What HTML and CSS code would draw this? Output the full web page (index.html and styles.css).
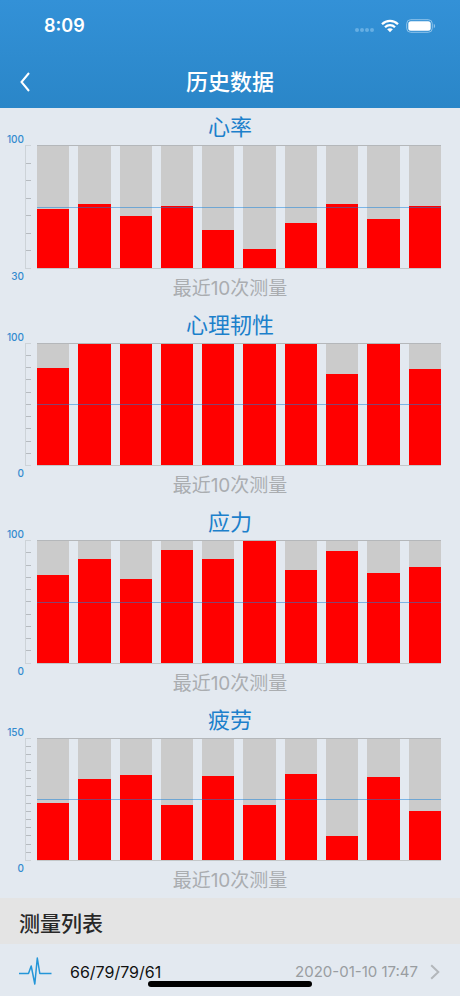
FILE: index.html
```html
<!DOCTYPE html>
<html lang="zh-CN">
<head>
<meta charset="utf-8">
<meta name="viewport" content="width=device-width, initial-scale=1">
<title>历史数据</title>
<link rel="stylesheet" href="styles.css">
</head>
<body>
<header class="top">
  <div class="status">
    <span class="time">8:09</span>
    <span class="status-icons">
      <span class="dots"><i></i><i></i><i></i><i></i></span>
      <svg class="wifi" viewBox="0 0 18 14" aria-hidden="true">
        <g fill="none" stroke="#fff" stroke-width="2.3">
          <path d="M1 5.2C5.5.8 12.500.8 17 5.200"/>
          <path d="M4 8.200C6.800 5.400 11.200 5.400 14 8.200"/>
        </g>
        <path fill="#fff" d="M6.100 10.300C7.700 8.800 10.300 8.800 11.900 10.300L9 13.300Z"/>
      </svg>
      <svg class="battery" viewBox="0 0 30 14" aria-hidden="true">
        <rect x=".7" y=".7" width="25.600" height="12.600" rx="4" fill="none" stroke="#8fc3ea" stroke-width="1"/>
        <rect x="2.300" y="2.300" width="22.400" height="9.400" rx="2.500" fill="#fff"/>
        <path d="M27.800 4.800C29.600 5.600 29.600 8.400 27.800 9.200Z" fill="#8fc3ea"/>
      </svg>
    </span>
  </div>
  <nav class="nav">
    <button class="back" type="button" aria-label="返回">
      <svg viewBox="0 0 10 20" aria-hidden="true"><path d="M9 1L1.500 10L9 19" fill="none" stroke="#fff" stroke-width="2"/></svg>
    </button>
    <h1>历史数据</h1>
  </nav>
</header>

<main class="charts">
  <section class="chart">
    <h2>心率</h2>
    <div class="body">
      <div class="axis"><span class="max">100</span><span class="min">30</span>
        <div class="ticks"><i></i><i></i><i></i><i></i><i></i><i></i><i></i><i></i></div></div>
      <div class="plot">
        <div class="bar"><b style="height:48%"></b></div>
        <div class="bar"><b style="height:52%"></b></div>
        <div class="bar"><b style="height:42%"></b></div>
        <div class="bar"><b style="height:51%"></b></div>
        <div class="bar"><b style="height:31%"></b></div>
        <div class="bar"><b style="height:15%"></b></div>
        <div class="bar"><b style="height:37%"></b></div>
        <div class="bar"><b style="height:52%"></b></div>
        <div class="bar"><b style="height:40%"></b></div>
        <div class="bar"><b style="height:51%"></b></div>
      </div>
    </div>
    <p>最近10次测量</p>
  </section>
  <section class="chart">
    <h2>心理韧性</h2>
    <div class="body">
      <div class="axis"><span class="max">100</span><span class="min">0</span>
        <div class="ticks"><i></i><i></i><i></i><i></i><i></i><i></i><i></i><i></i><i></i><i></i><i></i></div></div>
      <div class="plot">
        <div class="bar"><b style="height:80%"></b></div>
        <div class="bar"><b style="height:100%"></b></div>
        <div class="bar"><b style="height:100%"></b></div>
        <div class="bar"><b style="height:100%"></b></div>
        <div class="bar"><b style="height:100%"></b></div>
        <div class="bar"><b style="height:100%"></b></div>
        <div class="bar"><b style="height:100%"></b></div>
        <div class="bar"><b style="height:75%"></b></div>
        <div class="bar"><b style="height:100%"></b></div>
        <div class="bar"><b style="height:79%"></b></div>
      </div>
    </div>
    <p>最近10次测量</p>
  </section>
  <section class="chart">
    <h2>应力</h2>
    <div class="body">
      <div class="axis"><span class="max">100</span><span class="min">0</span>
        <div class="ticks"><i></i><i></i><i></i><i></i><i></i><i></i><i></i><i></i><i></i><i></i><i></i></div></div>
      <div class="plot">
        <div class="bar"><b style="height:72%"></b></div>
        <div class="bar"><b style="height:85%"></b></div>
        <div class="bar"><b style="height:69%"></b></div>
        <div class="bar"><b style="height:93%"></b></div>
        <div class="bar"><b style="height:85%"></b></div>
        <div class="bar"><b style="height:100%"></b></div>
        <div class="bar"><b style="height:76%"></b></div>
        <div class="bar"><b style="height:92%"></b></div>
        <div class="bar"><b style="height:74%"></b></div>
        <div class="bar"><b style="height:79%"></b></div>
      </div>
    </div>
    <p>最近10次测量</p>
  </section>
  <section class="chart">
    <h2>疲劳</h2>
    <div class="body">
      <div class="axis"><span class="max">150</span><span class="min">0</span>
        <div class="ticks"><i></i><i></i><i></i><i></i><i></i><i></i><i></i><i></i><i></i><i></i><i></i><i></i><i></i><i></i><i></i><i></i></div></div>
      <div class="plot">
        <div class="bar"><b style="height:47%"></b></div>
        <div class="bar"><b style="height:67%"></b></div>
        <div class="bar"><b style="height:70%"></b></div>
        <div class="bar"><b style="height:45%"></b></div>
        <div class="bar"><b style="height:69%"></b></div>
        <div class="bar"><b style="height:45%"></b></div>
        <div class="bar"><b style="height:71%"></b></div>
        <div class="bar"><b style="height:20%"></b></div>
        <div class="bar"><b style="height:68%"></b></div>
        <div class="bar"><b style="height:40%"></b></div>
      </div>
    </div>
    <p>最近10次测量</p>
  </section>
</main>

<section class="list">
  <h2>测量列表</h2>
  <a class="row" href="#record">
    <svg class="pulse" viewBox="0 0 34 32" aria-hidden="true"><path d="M0 17.500H9.500L12.200 10L15.800 28L18.300 2L20.800 17.500H32.500" fill="none" stroke="#2496d8" stroke-width="1.500" stroke-linejoin="round"/></svg>
    <span class="values">66/79/79/61</span>
    <time datetime="2020-01-10T17:47">2020-01-10 17:47</time>
    <svg class="more" viewBox="0 0 10 16" aria-hidden="true"><path d="M1.200 1.200L8.300 8L1.200 14.800" fill="none" stroke="#b3b7bb" stroke-width="2"/></svg>
  </a>
</section>
<div class="home"></div>
</body>
</html>
```
FILE: styles.css
```css
* { box-sizing: border-box; margin: 0; padding: 0; }

body {
  min-height: 100vh;
  display: flex;
  flex-direction: column;
  background: #e3e9f0;
  font-family: Inter, "Noto Sans CJK SC", sans-serif;
}

.top {
  background: linear-gradient(#3391d7, #2a86c8);
  color: #fff;
}

.status {
  height: 52px;
  padding: 0 24px 0 44px;
  display: flex;
  align-items: center;
  justify-content: space-between;
}

.time { font-size: 18px; font-weight: 600; line-height: 24px; }
.status-icons { display: flex; align-items: center; gap: 7px; }
.dots { display: flex; gap: 1px; padding-top: 8px; }
.dots i { width: 4px; height: 4px; border-radius: 50%; background: #66aee3; }
.wifi { width: 18px; height: 14px; }
.battery { width: 30px; height: 14px; }

.nav {
  height: 56px;
  padding-top: 3px;
  display: grid;
  grid-template-columns: 50px 1fr 50px;
  align-items: center;
}

.back {
  height: 44px;
  padding-left: 20px;
  border: 0;
  background: none;
  text-align: left;
}
.back svg { display: block; width: 10px; height: 20px; }
.nav h1 { font-size: 22px; font-weight: 500; line-height: 32px; text-align: center; }

.charts {
  flex: 1;
  display: grid;
  grid-auto-rows: 1fr;
}

.chart {
  display: flex;
  flex-direction: column;
  text-align: center;
}
.chart h2 {
  height: 37px;
  font-size: 22px;
  font-weight: 400;
  line-height: 38px;
  color: #1c80cb;
}
.chart p {
  height: 37px;
  font-size: 19px;
  line-height: 40px;
  color: #aaadb0;
}

.body {
  flex: 1;
  min-height: 120px;
  display: flex;
  gap: 6px;
  padding-right: 19px;
}

.axis {
  position: relative;
  width: 31px;
  padding-left: 25px;
  display: flex;
  font-size: 10px;
  font-weight: 500;
  line-height: 12px;
  color: #348bcf;
}
.max, .min { position: absolute; right: 7px; }
.max { top: -12px; }
.min { bottom: -13px; }

.ticks {
  flex: 1;
  display: flex;
  flex-direction: column;
  justify-content: space-between;
  border-left: 1px solid #cdd3d8;
}
.ticks i { height: 1px; background: #b6bbc0; }
.ticks i:first-child, .ticks i:last-child { background: #cdd3d8; }

.plot {
  position: relative;
  flex: 1;
  display: grid;
  grid-template-columns: repeat(10, 1fr);
  column-gap: 9px;
  border-top: 1px solid #b4b7ba;
  border-bottom: 1px solid #c3c7c9;
}
.plot::after {
  content: "";
  position: absolute;
  inset: 50% 0 auto;
  height: 1px;
  background: rgba(20, 130, 220, 0.5);
}
.bar {
  display: flex;
  align-items: flex-end;
  background: #cbcbcb;
}
.bar b { width: 100%; background: #f00; }

.list h2 {
  height: 46px;
  padding: 0 19px;
  background: #e4e4e4;
  font-size: 21px;
  font-weight: 500;
  line-height: 51px;
  color: #282828;
}

.row {
  height: 52px;
  padding: 4px 20px 0 19px;
  display: flex;
  align-items: center;
  color: #111;
  text-decoration: none;
}
.pulse { width: 34px; height: 32px; }
.values { flex: 1; padding-left: 17px; font-size: 16px; line-height: 24px; }
.row time { font-size: 15px; line-height: 24px; color: #999da1; }
.more { width: 10px; height: 16px; margin-left: 12px; }

.home {
  position: fixed;
  bottom: 9px;
  left: 50%;
  width: 164px;
  height: 6px;
  border-radius: 3px;
  background: #000;
  transform: translateX(-50%);
}
```
